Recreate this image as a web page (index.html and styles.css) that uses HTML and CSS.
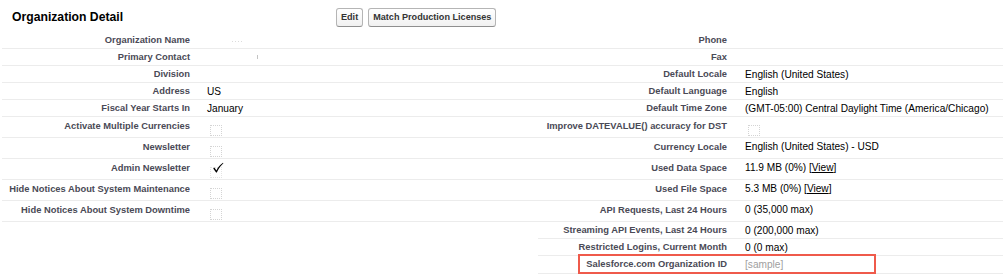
FILE: index.html
```html
<!DOCTYPE html>
<html>
<head>
<meta charset="utf-8">
<title>Organization Detail</title>
<link rel="stylesheet" href="styles.css">
</head>
<body>
<div class="page">
  <div class="pb-header">
    <h2 class="pb-title">Organization Detail</h2>
    <div class="pb-buttons">
      <button class="btn">Edit</button>
      <button class="btn">Match Production Licenses</button>
    </div>
  </div>
  <table class="detail-list">
    <colgroup>
      <col class="c-label1">
      <col class="c-data1">
      <col class="c-label2">
      <col class="c-data2">
    </colgroup>
    <tbody>
      <tr>
        <td class="label">Organization Name</td>
        <td class="data"><span class="redact-dots"></span></td>
        <td class="label">Phone</td>
        <td class="data"></td>
      </tr>
      <tr>
        <td class="label">Primary Contact</td>
        <td class="data"><span class="redact-tick"></span></td>
        <td class="label">Fax</td>
        <td class="data"></td>
      </tr>
      <tr>
        <td class="label">Division</td>
        <td class="data"></td>
        <td class="label">Default Locale</td>
        <td class="data">English (United States)</td>
      </tr>
      <tr>
        <td class="label">Address</td>
        <td class="data">US</td>
        <td class="label">Default Language</td>
        <td class="data">English</td>
      </tr>
      <tr>
        <td class="label">Fiscal Year Starts In</td>
        <td class="data">January</td>
        <td class="label">Default Time Zone</td>
        <td class="data">(GMT-05:00) Central Daylight Time (America/Chicago)</td>
      </tr>
      <tr class="cb-row">
        <td class="label">Activate Multiple Currencies</td>
        <td class="data"><div class="cb-wrap"><span class="cb"></span></div></td>
        <td class="label">Improve DATEVALUE() accuracy for DST</td>
        <td class="data"><div class="cb-wrap"><span class="cb"></span></div></td>
      </tr>
      <tr class="cb-row">
        <td class="label">Newsletter</td>
        <td class="data"><div class="cb-wrap"><span class="cb"></span></div></td>
        <td class="label">Currency Locale</td>
        <td class="data">English (United States) - USD</td>
      </tr>
      <tr class="cb-row">
        <td class="label">Admin Newsletter</td>
        <td class="data"><div class="cb-wrap"><span class="cb checked"><svg class="check" viewBox="0 0 12 12" width="12" height="12"><path d="M1.2 6.6 L2.4 5.6 L4.4 8.4 C6 5.2 8.4 2.6 11 0.8 L11.4 1.2 C8.8 3.6 6.6 6.6 4.8 10.6 L4.1 10.6 Z" fill="#000"/></svg></span></div></td>
        <td class="label">Used Data Space</td>
        <td class="data">11.9 MB (0%) [<a class="link" href="#">View</a>]</td>
      </tr>
      <tr class="cb-row">
        <td class="label">Hide Notices About System Maintenance</td>
        <td class="data"><div class="cb-wrap"><span class="cb"></span></div></td>
        <td class="label">Used File Space</td>
        <td class="data">5.3 MB (0%) [<a class="link" href="#">View</a>]</td>
      </tr>
      <tr class="cb-row">
        <td class="label">Hide Notices About System Downtime</td>
        <td class="data"><div class="cb-wrap"><span class="cb"></span></div></td>
        <td class="label">API Requests, Last 24 Hours</td>
        <td class="data">0 (35,000 max)</td>
      </tr>
      <tr>
        <td class="empty"></td>
        <td class="empty"></td>
        <td class="label">Streaming API Events, Last 24 Hours</td>
        <td class="data">0 (200,000 max)</td>
      </tr>
      <tr>
        <td class="empty"></td>
        <td class="empty"></td>
        <td class="label">Restricted Logins, Current Month</td>
        <td class="data">0 (0 max)</td>
      </tr>
      <tr class="last-row">
        <td class="empty"></td>
        <td class="empty"></td>
        <td class="label hl-cell">Salesforce.com Organization ID<span class="highlight"></span></td>
        <td class="data muted">[sample]</td>
      </tr>
    </tbody>
  </table>
</div>
</body>
</html>
```

FILE: styles.css
```css
html, body {
  margin: 0;
  padding: 0;
  background: #fff;
}

body {
  font-family: "Liberation Sans", Arial, Helvetica, sans-serif;
  color: #000;
}

.page {
  width: 1003px;
}

.pb-header {
  display: flex;
  align-items: center;
  height: 32px;
}

.pb-title {
  margin: 0;
  width: 324px;
  padding-left: 12px;
  font-size: 12.2px;
  font-weight: bold;
  color: #000;
  line-height: 14px;
  padding-top: 2px;
}

.pb-buttons {
  display: flex;
  gap: 5px;
  padding-top: 3px;
}

.btn {
  height: 19px;
  margin: 0;
  padding: 0 4px;
  font-family: "Liberation Sans", Arial, Helvetica, sans-serif;
  font-size: 9.1px;
  font-weight: bold;
  color: #333;
  background: linear-gradient(#ffffff, #f1f1f1);
  border: 1px solid #b5b5b5;
  border-bottom-color: #8f8f8f;
  border-radius: 3px;
  line-height: 17px;
}

.detail-list {
  margin-left: 2px;
  width: 1001px;
  border-collapse: collapse;
  table-layout: fixed;
}

.c-label1 { width: 198px; }
.c-data1 { width: 338px; }
.c-label2 { width: 199px; }
.c-data2 { width: auto; }

.detail-list td {
  vertical-align: top;
  border-bottom: 1px solid #ececec;
  line-height: 11px;
  padding-top: 3px;
  padding-bottom: 2px;
}

.detail-list td.label {
  text-align: right;
  font-size: 9.35px;
  font-weight: bold;
  color: #4a4a56;
  padding-right: 10px;
  padding-left: 2px;
  white-space: nowrap;
}

.detail-list tr.cb-row td.label {
  padding-top: 4px;
  padding-bottom: 1px;
}

.detail-list td.data {
  font-size: 10.15px;
  color: #000;
  padding-left: 7px;
  padding-right: 2px;
  white-space: nowrap;
}

.detail-list tr td:nth-child(4) {
  padding-left: 8px;
}

.detail-list td.empty {
  border-bottom: none;
}

.detail-list tr.last-row td {
  padding-bottom: 3px;
}

.detail-list td.data.muted {
  color: #a0a0a0;
}

.link {
  color: #000;
  text-decoration: underline;
}

.cb-wrap {
  height: 10px;
  padding-top: 5px;
}

.cb {
  position: relative;
  display: block;
  width: 10px;
  height: 9px;
  margin-left: 3px;
  border: 1px dotted #d4d4d4;
}

.cb.checked {
  border-color: #e4e4e4;
}

.check {
  position: absolute;
  left: 1px;
  top: -6px;
}

.redact-dots {
  display: inline-block;
  width: 10px;
  height: 1px;
  margin-left: 25px;
  margin-top: 6px;
  vertical-align: top;
  background: repeating-linear-gradient(90deg, #dcdcdc 0 1px, transparent 1px 3px);
}

.redact-tick {
  display: inline-block;
  width: 1px;
  height: 4px;
  margin-left: 50px;
  margin-top: 3px;
  vertical-align: top;
  background: #c4c4c4;
}

.hl-cell {
  position: relative;
}

.highlight {
  position: absolute;
  left: 40px;
  top: -2px;
  width: 298px;
  height: 20px;
  box-sizing: border-box;
  border: 2px solid #ef5a4b;
}
```
